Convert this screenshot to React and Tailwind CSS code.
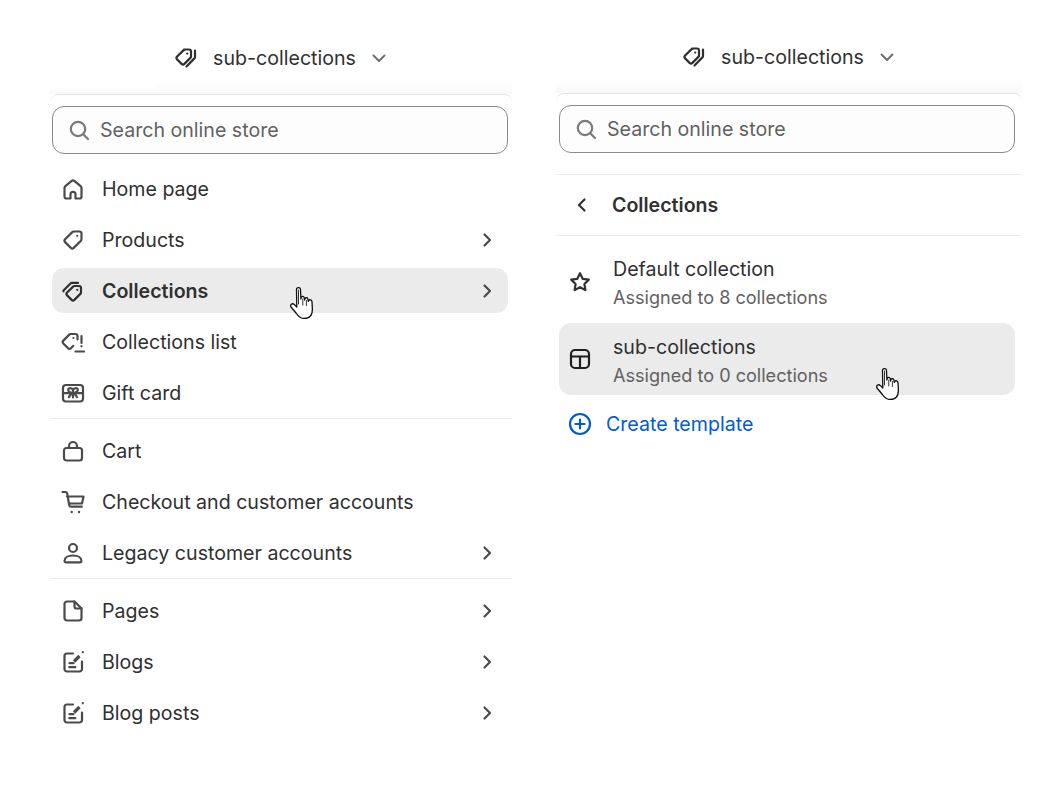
const font = { fontFamily: 'Inter, sans-serif' }

function Icon({ children, className = 'text-[#4a4a4a]' }) {
  return (
    <svg
      viewBox="0 0 24 24"
      fill="none"
      stroke="currentColor"
      strokeWidth="2.2"
      strokeLinecap="round"
      strokeLinejoin="round"
      className={`w-6 h-6 shrink-0 ${className}`}
    >
      {children}
    </svg>
  )
}

const icons = {
  home: <path d="M9.500 21.500H5.500a2 2 0 0 1-2-2V11c0-.8.3-1.400.9-1.900l6.300-5.200a2 2 0 0 1 2.600 0l6.300 5.200c.6.500.9 1.100.9 1.900v8.500a2 2 0 0 1-2 2h-4v-4.200a2.500 2.500 0 0 0-5 0z" />,
  tag: (
    <>
      <path d="M12.700 3.500h5.800a2 2 0 0 1 2 2v5.800c0 .5-.2 1-.6 1.400l-7.200 7.200a2 2 0 0 1-2.800 0l-5.800-5.800a2 2 0 0 1 0-2.800l7.200-7.200c.4-.4.9-.6 1.400-.6z" />
      <circle cx="16.200" cy="7.800" r="1.100" fill="currentColor" stroke="none" />
    </>
  ),
  collections: (
    <>
      <path d="M13.500 7h4.500a2 2 0 0 1 2 2v4.500c0 .5-.2 1-.6 1.400l-6 6a2 2 0 0 1-2.800 0l-4.500-4.500a2 2 0 0 1 0-2.800l6-6c.4-.4.9-.6 1.400-.6z" />
      <path d="M2.500 12.500v-1l7-7c.4-.4.9-.6 1.400-.6H17" />
      <circle cx="16.200" cy="10.800" r="1.100" fill="currentColor" stroke="none" />
    </>
  ),
  collectionsList: (
    <>
      <path d="M16.500 9.500V6a2 2 0 0 0-2-2H9.700c-.5 0-1 .2-1.400.6l-6 6a2 2 0 0 0 0 2.800l4.800 4.800a2 2 0 0 0 2.800 0l2.400-2.400" />
      <circle cx="12.400" cy="8" r="1.100" fill="currentColor" stroke="none" />
      <path d="M20.500 6v7M20.500 16.200v.1M14.500 21.500h8.500" />
    </>
  ),
  gift: (
    <>
      <rect x="2" y="4" width="20" height="16.500" rx="3" />
      <path d="M12 9c-1-2.500-5-2.500-4.800 0 .1 1.800 3 3.200 4.800 3.200s4.700-1.400 4.800-3.200c.2-2.500-3.800-2.500-4.800 0zM12 12c-1 .5-3.500 2-4 4.200M12 12c1 .5 3.500 2 4 4.200M12 9v7.500M2 12.200h20" />
    </>
  ),
  cart: (
    <>
      <rect x="3" y="9" width="18" height="12.500" rx="2.500" />
      <path d="M8 9V7a4 4 0 0 1 8 0v2" />
    </>
  ),
  checkout: (
    <>
      <path d="M1.500 2h3c.8 0 1.500.6 1.700 1.400L8.300 15.500c.2.800.7 1.200 1.500 1.200h11M6 6.500h16.500l-1.500 7H8" />
      <circle cx="10.700" cy="22" r="1.200" fill="currentColor" stroke="none" />
      <circle cx="18" cy="22" r="1.200" fill="currentColor" stroke="none" />
    </>
  ),
  person: (
    <>
      <circle cx="12" cy="7" r="4" />
      <path d="M3.500 20c0-3.500 3.800-5.500 8.500-5.500s8.500 2 8.500 5.500c0 .8-.4 1.300-1.200 1.300H4.700c-.8 0-1.200-.5-1.200-1.300z" />
    </>
  ),
  page: (
    <>
      <path d="M13.500 2.500H6A2.500 2.500 0 0 0 3.500 5v14A2.500 2.500 0 0 0 6 21.500h12a2.500 2.500 0 0 0 2.500-2.500V9.500z" />
      <path d="M13.500 2.500v5a2 2 0 0 0 2 2h5" />
    </>
  ),
  blog: (
    <>
      <path d="M12 3.500H6A2.500 2.500 0 0 0 3.500 6v13A2.500 2.500 0 0 0 6 21.500h12.500A2.500 2.500 0 0 0 21 19v-7.500" />
      <path d="M13 11.500l5.500-5.500" strokeWidth="3.200" strokeLinecap="butt" />
      <path d="M21.800 2.200v.1M8.500 13.200h4M8.300 17.200h6" />
    </>
  ),
  star: <path d="M12 3.200l2.700 5.600 6.100.9-4.400 4.300 1 6.100-5.400-2.900-5.400 2.900 1-6.100-4.400-4.300 6.100-.9z" />,
  layout: (
    <>
      <rect x="3" y="3" width="18" height="18" rx="4" />
      <path d="M3 9.500h18M12 9.500V21" />
    </>
  ),
}

function Chevron() {
  return (
    <svg viewBox="0 0 24 24" fill="none" stroke="#4a4a4a" strokeWidth="2.2" strokeLinecap="round" strokeLinejoin="round" className="w-6 h-6 shrink-0">
      <path d="M9.500 6.500l5.500 5.500-5.500 5.500" />
    </svg>
  )
}

function Hand({ className }) {
  return (
    <svg viewBox="0 0 24 32" className={`absolute w-6 h-8 pointer-events-none ${className}`}>
      <path
        d="M6.500 2.500C6.500 0 10.500 0 10.500 2.500l.4 9.500.4-1.800c.5-1.200 2.400-1.200 2.900.3l.4 2.500.5-1.500c.6-1.200 2.400-1 2.800.5l.4 2.300.6-1c1-1 2.900-.5 3.100 1.500l.4 7.700c0 5.700-3 9-8 9-4 0-6-2-8-5L1 20c-1.200-2 1.200-4.200 3.200-2.600L6.800 20z"
        fill="#fff"
        stroke="#111"
        strokeWidth="1.300"
        strokeLinejoin="round"
      />
      <path d="M8.500 3v14M12.800 12v6M16.400 13.500v5" stroke="#333" strokeWidth="1" strokeLinecap="round" />
    </svg>
  )
}

function Header() {
  return (
    <div className="flex items-center justify-center h-10 pl-[3px]">
      <svg viewBox="0 0 24 24" fill="none" stroke="#303030" strokeWidth="2.200" strokeLinecap="round" strokeLinejoin="round" className="w-6 h-6 shrink-0">
        <path d="M10 3.500h5a2 2 0 0 1 2 2v5c0 .5-.2 1-.6 1.400l-6 6a2 2 0 0 1-2.800 0l-4.500-4.500a2 2 0 0 1 0-2.800l6-6c.4-.4.9-.6 1.400-.6z" />
        <path d="M21 4.500v6.500c0 .5-.2 1-.6 1.400L12.500 20.500" />
        <circle cx="13.200" cy="7.600" r="1.100" fill="#303030" stroke="none" />
      </svg>
      <span className="ml-[15px] pt-[2px] text-[19.6px] text-[#303030]">sub-collections</span>
      <svg viewBox="0 0 24 24" fill="none" stroke="#6f6f6f" strokeWidth="2" strokeLinecap="round" strokeLinejoin="round" className="w-6 h-6 ml-[11px] shrink-0">
        <path d="M6.500 9.500l5.500 5.500 5.500-5.500" />
      </svg>
    </div>
  )
}

function Search() {
  return (
    <div className="flex items-center h-12 rounded-xl border border-[#8a8a8a] bg-[#fdfdfd] pl-[14px]">
      <svg viewBox="0 0 24 24" fill="none" stroke="#7a7a7a" strokeWidth="2.200" strokeLinecap="round" className="w-6 h-6 shrink-0">
        <circle cx="11" cy="11" r="7.200" />
        <path d="M16.200 16.200l4.800 4.800" />
      </svg>
      <span className="ml-[9px] pt-[2px] text-[19.6px] text-[#616161]">Search online store</span>
    </div>
  )
}

function Row({ icon, label, chevron, active, children }) {
  return (
    <div className={`relative flex items-center h-[45px] rounded-xl pl-[9px] pr-[9px] ${active ? 'bg-[#ebebeb]' : ''}`}>
      <Icon className={active ? 'text-[#303030]' : 'text-[#4a4a4a]'}>{icons[icon]}</Icon>
      <span className={`ml-[17px] pt-[2px] flex-1 text-[19.6px] text-[#303030] ${active ? 'font-semibold' : ''}`}>{label}</span>
      {chevron && <Chevron />}
      {children}
    </div>
  )
}

export default function App() {
  return (
    <div style={font} className="bg-white w-[1064px] h-[793px] overflow-hidden flex items-start pl-[50px] gap-[44px]">
      <div className="w-[462px] pt-[38px]">
        <Header />
        <div className="h-4 flex items-end">
          <div className="w-[108px] h-[7px] bg-gradient-to-b from-white to-[#f8f8f8]" />
          <div className="flex-1 h-full bg-gradient-to-b from-white to-[#f9f9f9]" />
        </div>
        <div className="border-t border-[#e6e6e6] rounded-t-lg pl-[2px] pr-[4px] pt-[11px]">
          <Search />
          <div className="mt-[12px] flex flex-col gap-[6px]">
            <Row icon="home" label="Home page" />
            <Row icon="tag" label="Products" chevron />
            <Row icon="collections" label="Collections" chevron active>
              <Hand className="left-[238px] top-[19px]" />
            </Row>
            <Row icon="collectionsList" label="Collections list" />
            <Row icon="gift" label="Gift card" />
          </div>
          <div className="-ml-[2px] -mr-[4px] mt-[3px] mb-[9px] border-t border-[#ebebeb]" />
          <div className="flex flex-col gap-[6px]">
            <Row icon="cart" label="Cart" />
            <Row icon="checkout" label="Checkout and customer accounts" />
            <Row icon="person" label="Legacy customer accounts" chevron />
          </div>
          <div className="-ml-[2px] -mr-[4px] mt-[3px] mb-[9px] border-t border-[#ebebeb]" />
          <div className="flex flex-col gap-[6px]">
            <Row icon="page" label="Pages" chevron />
            <Row icon="blog" label="Blogs" chevron />
            <Row icon="blog" label="Blog posts" chevron />
          </div>
        </div>
      </div>

      <div className="w-[466px] pt-[37px]">
        <Header />
        <div className="h-4 bg-gradient-to-b from-white to-[#f9f9f9]" />
        <div className="border-t border-[#e6e6e6] rounded-t-lg pt-[11px]">
          <div className="pl-[3px] pr-[7px]">
            <Search />
          </div>
          <div className="mt-[21px] border-y border-[#ebebeb] h-[62px] flex items-center pl-[14px]">
            <svg viewBox="0 0 24 24" fill="none" stroke="#303030" strokeWidth="2.200" strokeLinecap="round" strokeLinejoin="round" className="w-6 h-6 shrink-0">
              <path d="M14.500 6.500l-5.500 5.500 5.500 5.500" />
            </svg>
            <span className="ml-[18px] pt-[2px] text-[19.6px] font-semibold text-[#303030]">Collections</span>
          </div>
          <div className="pl-[3px] pr-[7px] pt-[9px] flex flex-col gap-[5px]">
            <div className="flex items-center h-[73px] pl-[9px]">
              <Icon className="text-[#303030]">{icons.star}</Icon>
              <div className="ml-[21px] pt-[3px]">
                <div className="text-[19.6px] leading-7 text-[#303030]">Default collection</div>
                <div className="text-[18.1px] leading-7 text-[#616161]">Assigned to 8 collections</div>
              </div>
            </div>
            <div className="relative flex items-center h-[72px] rounded-xl bg-[#ebebeb] pl-[9px]">
              <Icon className="text-[#1f1f1f]">{icons.layout}</Icon>
              <div className="ml-[21px] pt-[4px]">
                <div className="text-[19.6px] leading-7 text-[#303030]">sub-collections</div>
                <div className="text-[18.1px] leading-7 text-[#616161]">Assigned to 0 collections</div>
              </div>
              <Hand className="left-[317px] top-[45px]" />
            </div>
            <div className="flex items-center h-[48px] pl-[9px]">
              <svg viewBox="0 0 24 24" fill="none" stroke="#005bd3" strokeWidth="2.200" strokeLinecap="round" className="w-6 h-6 shrink-0">
                <circle cx="12" cy="12" r="10" />
                <path d="M12 7.500v9M7.500 12h9" />
              </svg>
              <span className="ml-[14px] pt-[2px] text-[19.6px] text-[#005bd3]">Create template</span>
            </div>
          </div>
        </div>
      </div>
    </div>
  )
}
